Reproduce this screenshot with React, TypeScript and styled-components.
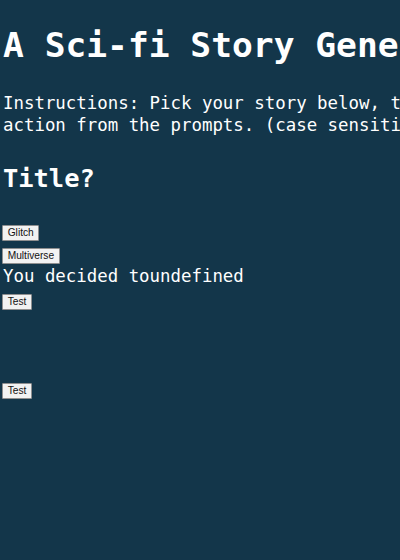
import React from "react";
import styled, { createGlobalStyle } from "styled-components";

const Global = createGlobalStyle`
  html, body {
    margin: 0;
    padding: 0;
    background: #13364a;
    overflow: hidden;
  }
  body {
    width: 400px;
    height: 560px;
  }
`;

const Page = styled.main`
  box-sizing: border-box;
  width: 400px;
  height: 560px;
  overflow: hidden;
  background: #13364a;
  color: #ffffff;
  font-family: "DejaVu Sans Mono", "Liberation Mono", monospace;
  display: flex;
  flex-direction: column;
  align-items: flex-start;
  padding: 0 3px;
`;

const Heading = styled.h1`
  margin: 25px 0 0;
  font-size: 34.6px;
  line-height: 40px;
  font-weight: bold;
  white-space: nowrap;
`;

const Instructions = styled.p`
  margin: 27px 0 0;
  font-size: 17.4px;
  line-height: 22.4px;
  white-space: nowrap;
`;

const SubHeading = styled.h2`
  margin: 26px 0 0;
  font-size: 25.4px;
  line-height: 30px;
  font-weight: bold;
  white-space: nowrap;
`;

const Choice = styled.button<{ $gap: number }>`
  margin: ${(p) => p.$gap}px 0 0 -1px;
  padding: 1px 4.7px;
  font-family: "Liberation Sans", Arial, sans-serif;
  font-size: 10.2px;
  line-height: 12px;
  color: #111;
  background: #f2f2f2;
  border: 1px solid #8f8f8f;
  border-radius: 1px;
  cursor: pointer;
`;

const Outcome = styled.div`
  margin-top: 1px;
  font-size: 17.4px;
  line-height: 22.4px;
  white-space: nowrap;
`;

export default function App() {
  return (
    <>
      <Global />
      <Page>
        <Heading>A Sci-fi Story Generator</Heading>
        <Instructions>
          Instructions: Pick your story below, then choose your
          <br />
          action from the prompts. (case sensitive)
        </Instructions>
        <SubHeading>Title?</SubHeading>
        <Choice $gap={32}>Glitch</Choice>
        <Choice $gap={7.5}>Multiverse</Choice>
        <Outcome>You decided toundefined</Outcome>
        <Choice $gap={6}>Test</Choice>
        <Choice $gap={73}>Test</Choice>
      </Page>
    </>
  );
}
